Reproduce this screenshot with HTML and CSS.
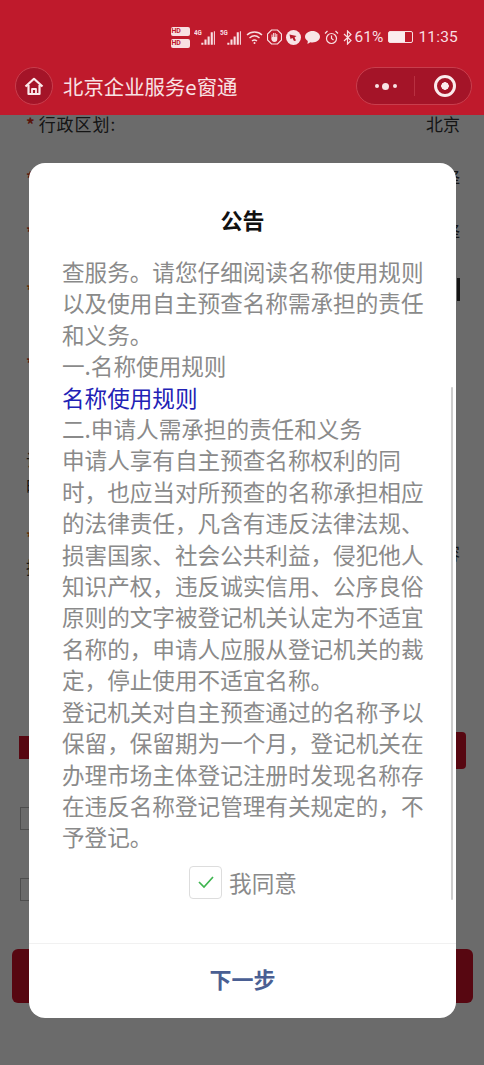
FILE: index.html
```html
<!DOCTYPE html>
<html lang="zh-CN">
<head>
<meta charset="utf-8">
<title>北京企业服务e窗通</title>
<link rel="stylesheet" href="styles.css">
</head>
<body>
<div class="phone">
  <header class="top">
    <div class="status">
      <div class="hd"><span class="hd-tag">HD</span><span class="hd-tag">HD</span></div>
      <svg class="sig" width="23" height="17" viewBox="0 0 22 16"><text x="0" y="6" class="tiny">4G</text><path d="M7 13h2v2H7zM10 10h2v5h-2zM13 7h2v8h-2zM16 3h2v12h-2zM19 2h1v13h-1z" fill="#f8dfe2"/></svg>
      <svg class="sig" width="23" height="17" viewBox="0 0 22 16"><text x="0" y="6" class="tiny">5G</text><path d="M7 13h2v2H7zM10 10h2v5h-2zM13 7h2v8h-2zM16 3h2v12h-2zM19 2h1v13h-1z" fill="#f8dfe2"/></svg>
      <svg width="17" height="15" viewBox="0 0 17 15" fill="none" stroke="#f8dfe2" stroke-width="1.4"><path d="M1 5c4-4 11-4 15 0M3.500 8c3-2.600 7-2.600 10 0M6 11c1.500-1.200 3.500-1.200 5 0"/><circle cx="8.500" cy="13" r="1" fill="#f8dfe2" stroke="none"/></svg>
      <svg width="15" height="16" viewBox="0 0 15 16"><path d="M4.500 1h6L14.500 5v6l-4 4h-6L.5 11V5z" fill="none" stroke="#f8dfe2" stroke-width="1.200"/><path d="M4.500 8V5.500h1V8h.6V4h1v4h.6V4h1v4h.6V5h1v5c0 2-1 3-3 3-1.500 0-2.300-.8-3-3z" fill="#f8dfe2"/></svg>
      <svg width="15" height="15" viewBox="0 0 15 15"><circle cx="7.500" cy="7.500" r="7.500" fill="#f8e4e6"/><path d="M3.500 4.500l7 1.500-2 1.500 1.500 3-2 .5-1.500-3-2 1z" fill="#b51a2b"/></svg>
      <svg width="15" height="15" viewBox="0 0 15 15"><path d="M7.500 1C11.500 1 15 3.500 15 6.800s-3.500 5.700-7.500 5.700c-.8 0-1.500-.1-2.200-.3L2.500 14l.3-3C1 9.900 0 8.400 0 6.800 0 3.500 3.500 1 7.500 1z" fill="#f8e4e6"/></svg>
      <svg width="15" height="15" viewBox="0 0 15 15" fill="none" stroke="#f8dfe2" stroke-width="1.200"><circle cx="7.500" cy="8.500" r="5"/><path d="M7.500 5.500v3l2 1.500M1 3.500L3.500 1M14 3.500L11.500 1"/></svg>
      <svg width="9" height="15" viewBox="0 0 9 15" fill="none" stroke="#f8dfe2" stroke-width="1.200"><path d="M1 4l7 6.500-3.500 3.500V1L8 4.500 1 11"/></svg>
      <span class="pct">61%</span>
      <span class="battery"><span class="level"></span></span>
      <span class="time">11:35</span>
    </div>
    <nav class="nav">
      <span class="home">
        <svg width="20" height="19" viewBox="0 0 20 19" fill="none" stroke="#fbeaec" stroke-width="2.200" stroke-linejoin="round"><path d="M1.500 9.500L10 1.800l8.500 7.700M4.500 8v9h11V8"/><path d="M8 17v-5h4v5" stroke-width="1.800"/></svg>
      </span>
      <span class="nav-title">北京企业服务e窗通</span>
      <span class="capsule">
        <span class="dots"><i class="dot"></i><i class="dot big"></i><i class="dot"></i></span>
        <span class="cap-line"></span>
        <span class="ring"></span>
      </span>
    </nav>
  </header>

  <main class="form">
    <div class="row first"><span class="label"><b class="star">*</b>行政区划:</span><span>北京</span></div>
    <div class="row h55"><b class="star">*</b><span>择</span></div>
    <div class="row h53"><b class="star">*</b><span>择</span></div>
    <div class="row h62"><b class="star org">*</b><span class="bar"></span></div>
    <div class="row h72"><b class="star">*</b></div>
    <div class="note">说<br>明</div>
    <div class="row h60"><span class="stack"><b class="star org">*</b><br>提</span><span>容</span></div>
    <div class="actions"><span class="tag"></span><span class="tag-btn"></span></div>
    <div class="check"><i class="box"></i></div>
    <div class="check second"><i class="box"></i></div>
    <div class="main-btn"></div>
  </main>

  <div class="mask">
    <section class="modal">
      <h1 class="m-title">公告</h1>
      <div class="m-body">
        <p>查服务。请您仔细阅读名称使用规则以及使用自主预查名称需承担的责任和义务。</p>
        <p>一.名称使用规则</p>
        <p class="link">名称使用规则</p>
        <p>二.申请人需承担的责任和义务</p>
        <p>申请人享有自主预查名称权利的同时&#xFF0C;也应当对所预查的名称承担相应的法律责任&#xFF0C;凡含有违反法律法规、损害国家、社会公共利益&#xFF0C;侵犯他人知识产权&#xFF0C;违反诚实信用、公序良俗原则的文字被登记机关认定为不适宜名称的&#xFF0C;申请人应服从登记机关的裁定&#xFF0C;停止使用不适宜名称。</p>
        <p>登记机关对自主预查通过的名称予以保留&#xFF0C;保留期为一个月&#xFF0C;登记机关在办理市场主体登记注册时发现名称存在违反名称登记管理有关规定的&#xFF0C;不予登记。</p>
        <div class="agree">
          <span class="agree-box"><svg width="18" height="14" viewBox="0 0 18 14" fill="none" stroke="#3fb550" stroke-width="1.700"><path d="M2 7l5 5L16 2"/></svg></span>
          <span>我同意</span>
        </div>
      </div>
      <span class="scroll"></span>
      <div class="m-foot">下一步</div>
    </section>
  </div>
</div>
</body>
</html>
```
FILE: styles.css
```css
* { box-sizing: border-box; }
html, body { margin: 0; padding: 0; }
body { width: 484px; height: 1065px; overflow: hidden; background: #fff; font-family: "Noto Sans CJK SC", "Noto Sans", sans-serif; }
.phone { position: relative; width: 484px; height: 1065px; overflow: hidden; }

/* header */
.top { position: relative; z-index: 3; height: 115px; background: #bf1a2c; }
.status { height: 60px; padding: 14px 26px 0 0; display: flex; justify-content: flex-end; align-items: center; gap: 4px; color: #f8dfe2; font-family: Roboto, sans-serif; }
.hd { display: flex; flex-direction: column; gap: 3px; }
.hd-tag { display: block; width: 19px; height: 9px; font-size: 7px; line-height: 9px; font-weight: 700; color: #bf1a2c; background: #f8dfe2; border-radius: 2px; text-align: left; padding-left: 1px; letter-spacing: -.3px; }
.tiny { font: 700 6px Roboto, sans-serif; fill: #f8dfe2; }
.sig { margin-right: -1px; }
.pct { font-size: 15.500px; margin-left: -1px; }
.battery { width: 25px; height: 12px; margin: 0 1px; border: 1px solid #f8dfe2; border-radius: 2px; display: block; }
.level { display: block; width: 16px; height: 100%; background: #fbecee; }
.time { font-size: 15.500px; letter-spacing: .2px; }
.nav { height: 55px; padding: 7px 12px 10px 15px; display: flex; align-items: center; }
.home { width: 38px; height: 38px; border-radius: 50%; background: #a41428; border: 1px solid #c83e4d; display: flex; align-items: center; justify-content: center; }
.nav-title { margin-left: 10px; font-size: 20.400px; color: #f8e2e4; flex: 1; }
.capsule { width: 116px; height: 38px; border-radius: 19px; background: #a41428; border: 1px solid #c83e4d; display: flex; align-items: center; }
.dots { width: 57px; display: flex; justify-content: center; align-items: center; gap: 3.500px; }
.dot { width: 4px; height: 4px; border-radius: 50%; background: #f8e2e4; }
.dot.big { width: 7px; height: 7px; }
.cap-line { width: 1px; height: 20px; background: #b93041; }
.ring { width: 22px; height: 22px; margin-left: 19px; border-radius: 50%; border: 3px solid #fbeaec; background: radial-gradient(circle, #fbeaec 0 3.500px, #a41428 4px); }

/* page under the mask */
.form { padding: 0 24px 0 26px; color: #333; font-size: 17px; }
.row { display: flex; justify-content: space-between; align-items: center; white-space: nowrap; }
.first { height: 17px; }
.label { letter-spacing: 1px; }
.h55 { height: 55px; margin-top: 18px; }
.h53 { height: 53px; }
.h62 { height: 62px; }
.h72 { height: 72px; margin-top: 6px; }
.h60 { height: 60px; margin-top: 22px; }
.star { font-weight: 700; color: #d4321c; margin-right: 3px; }
.org { color: #e8650a; }
.stack { line-height: 30px; align-self: flex-start; }
.bar { width: 3px; height: 23px; background: #333; }
.note { margin-top: 48px; line-height: 27px; height: 54px; }
.actions { margin: 150px -6px 0 -7px; height: 37px; display: flex; justify-content: space-between; align-items: flex-start; }
.tag { width: 60px; height: 23px; margin-top: 4px; background: #d0122a; }
.tag-btn { width: 60px; height: 37px; background: #d0122a; border-radius: 4px; }
.check { margin: 38px 0 0 -6px; height: 23px; }
.check.second { margin-top: 48px; }
.box { display: block; width: 24px; height: 23px; border: 1px solid #bbb; }
.main-btn { margin: 48px -13px 0 -14px; height: 54px; background: #d0122a; border-radius: 6px; }

/* modal */
.mask { position: absolute; z-index: 2; inset: 0; background: rgba(0, 0, 0, .58); padding: 163px 28px 47px 29px; }
.modal { position: relative; height: 855px; background: #fff; border-radius: 16px; display: flex; flex-direction: column; overflow: hidden; }
.m-title { margin: 0; height: 93px; padding-top: 38px; text-align: center; font-size: 22px; line-height: 36px; font-weight: 700; color: #111; }
.m-body { flex: 1; padding: 0 32px 0 33px; color: #8a8a8a; font-size: 22.600px; line-height: 31.400px; overflow: hidden; }
.m-body p { margin: 0; }
.link { color: #2222b5; }
.agree { margin-top: 13px; height: 33px; display: flex; justify-content: center; align-items: center; gap: 7px; }
.agree-box { width: 33px; height: 33px; border: 1px solid #ddd; border-radius: 4px; display: flex; align-items: center; justify-content: center; }
.scroll { position: absolute; right: 3px; top: 224px; width: 2.500px; height: 513px; background: #cdcdcd; border-radius: 2px; }
.m-foot { height: 75px; padding-bottom: 6px; border-top: 1px solid #f1f1f1; display: flex; align-items: center; justify-content: center; font-size: 22px; font-weight: 700; color: #4a5f93; }
```
